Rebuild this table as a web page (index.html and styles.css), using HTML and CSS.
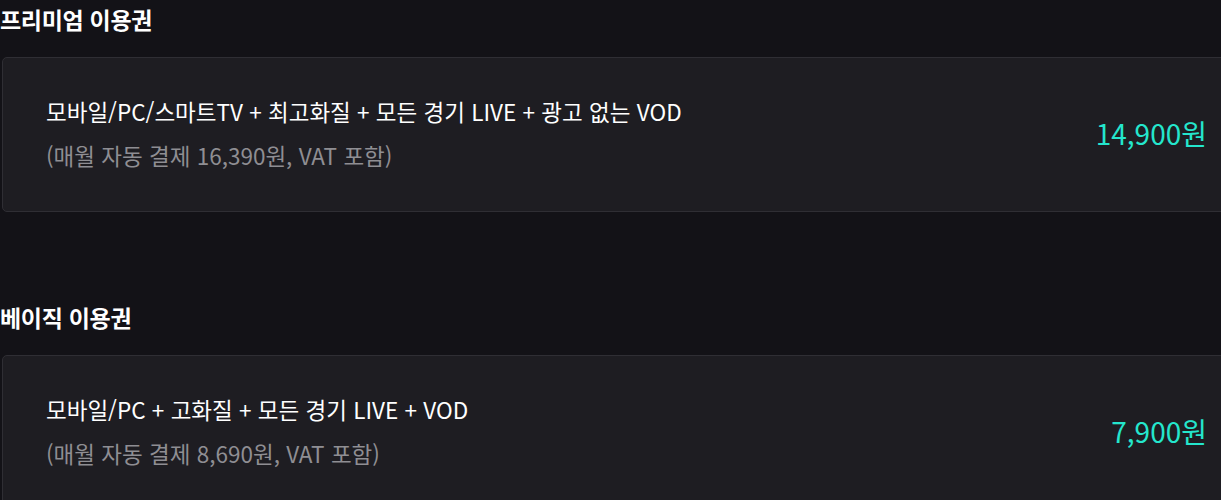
FILE: index.html
```html
<!DOCTYPE html>
<html lang="ko">

<head>
  <meta charset="UTF-8">
  <meta name="viewport" content="width=device-width, initial-scale=1.0">
  <title>이용권 선택</title>
  <link rel="stylesheet" href="styles.css">
</head>

<body>
  <div class="plans">
    <section class="plan-group">
      <h3 class="plan-title">프리미엄 이용권</h3>
      <div class="plan-card">
        <div class="plan-info">
          <p class="plan-desc">모바일/PC/스마트TV + 최고화질 + 모든 경기 LIVE + 광고 없는 VOD</p>
          <p class="plan-note">(매월 자동 결제 16,390원, VAT 포함)</p>
        </div>
        <div class="plan-price">14,900원</div>
      </div>
    </section>

    <section class="plan-group">
      <h3 class="plan-title">베이직 이용권</h3>
      <div class="plan-card">
        <div class="plan-info">
          <p class="plan-desc">모바일/PC + 고화질 + 모든 경기 LIVE + VOD</p>
          <p class="plan-note">(매월 자동 결제 8,690원, VAT 포함)</p>
        </div>
        <div class="plan-price">7,900원</div>
      </div>
    </section>
  </div>
</body>

</html>
```

FILE: styles.css
```css
body {
  margin: 0;
  background-color: #131217;
  font-family: "Noto Sans CJK KR", "Noto Sans", sans-serif;
  color: #fff;
  overflow: hidden;
}

.plans {
  width: 1238px;
}

.plan-group {
  margin-bottom: 86px;
}

.plan-title {
  margin: 0 0 22px;
  padding-top: 3px;
  font-size: 23px;
  font-weight: 700;
  line-height: 32px;
  letter-spacing: -0.3px;
}

.plan-card {
  display: flex;
  justify-content: space-between;
  align-items: center;
  margin-left: 2px;
  padding: 35px 30px 38px 43px;
  background-color: #1e1d22;
  border: 1px solid #2f2e34;
  border-radius: 5px;
}

.plan-info p {
  margin: 0;
}

.plan-info .plan-desc {
  font-size: 22.5px;
  line-height: 36px;
}

.plan-info .plan-note {
  margin-top: 8px;
  font-size: 22.5px;
  line-height: 36px;
  color: #8f8e93;
}

.plan-price {
  font-size: 28px;
  color: #24e6cd;
}
```
